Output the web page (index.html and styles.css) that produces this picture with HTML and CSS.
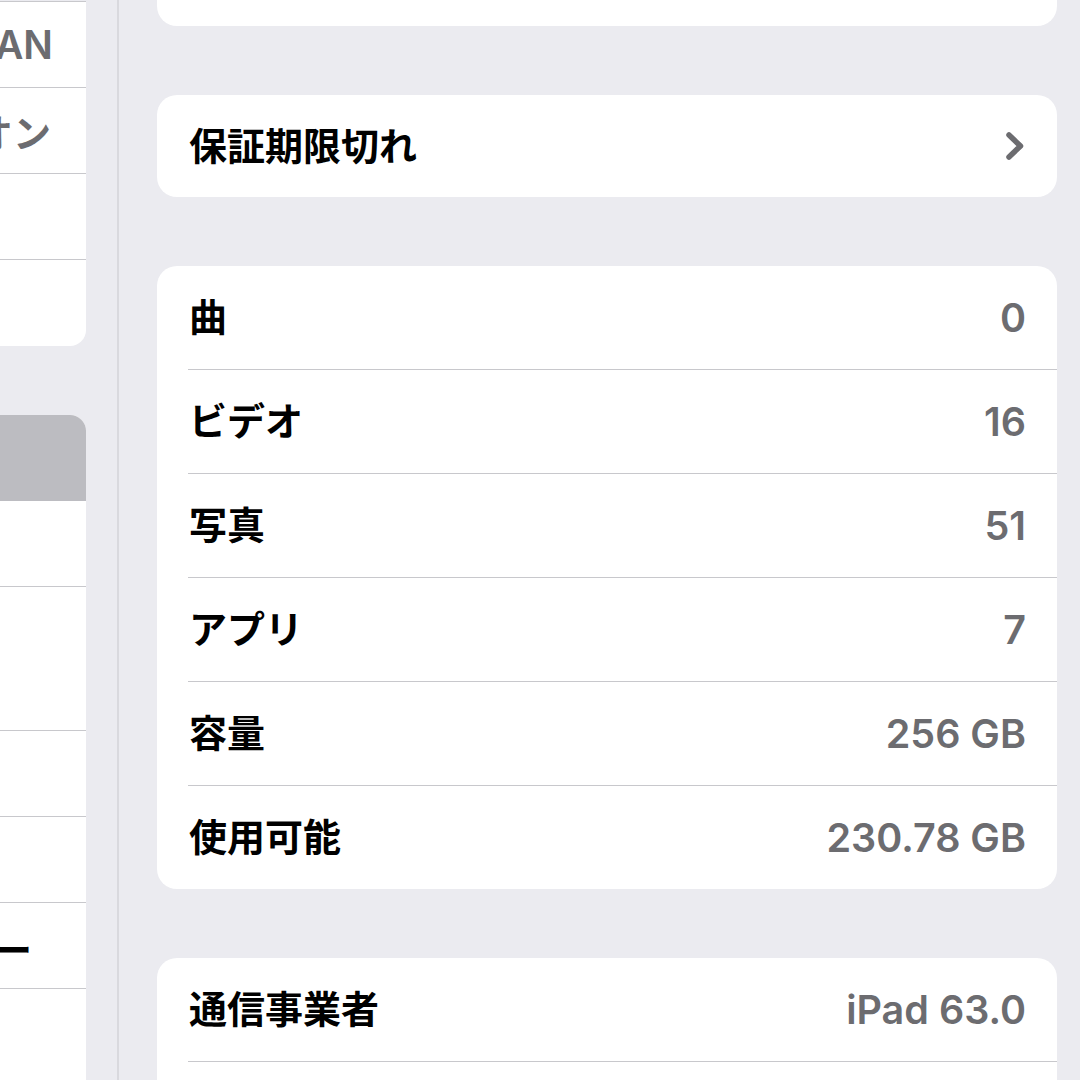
FILE: index.html
```html
<!DOCTYPE html>
<html lang="ja">
<head>
<meta charset="utf-8">
<link rel="stylesheet" href="styles.css">
</head>
<body>
<div class="screen">
  <aside class="sidebar">
    <div class="sgroup sgroup-top">
      <div class="srow"><span class="stext stext-an">AN</span></div>
      <div class="srow"><span class="stext stext-on">オン</span></div>
      <div class="srow"></div>
      <div class="srow srow-last"></div>
    </div>
    <div class="sgroup sgroup-bottom">
      <div class="srow srow-selected"></div>
      <div class="srow srow-first"></div>
      <div class="srow srow-tall"></div>
      <div class="srow"></div>
      <div class="srow"></div>
      <div class="srow"><span class="stext stext-dash">ー</span></div>
      <div class="srow srow-open"></div>
    </div>
  </aside>
  <div class="divider"></div>
  <main class="detail">
    <section class="card card-stub"></section>
    <section class="card">
      <div class="row row-single">
        <span class="label">保証期限切れ</span>
        <svg class="chevron" width="22" height="32" viewBox="0 0 22 32"><path d="M5 5 L16.5 16 L5 27" fill="none" stroke="#6c6c70" stroke-width="5.5" stroke-linecap="round" stroke-linejoin="round"/></svg>
      </div>
    </section>
    <section class="card">
      <div class="row"><span class="label">曲</span><span class="value">0</span></div>
      <div class="row"><span class="label">ビデオ</span><span class="value">16</span></div>
      <div class="row"><span class="label">写真</span><span class="value">51</span></div>
      <div class="row"><span class="label">アプリ</span><span class="value">7</span></div>
      <div class="row"><span class="label">容量</span><span class="value">256 GB</span></div>
      <div class="row"><span class="label">使用可能</span><span class="value">230.78 GB</span></div>
    </section>
    <section class="card card-open">
      <div class="row"><span class="label">通信事業者</span><span class="value">iPad 63.0</span></div>
      <div class="row"></div>
    </section>
  </main>
</div>
</body>
</html>
```
FILE: styles.css
```css
html, body {
  margin: 0;
  padding: 0;
  background: #ebebf0;
  width: 1080px;
  height: 1080px;
  overflow: hidden;
}
.screen {
  display: flex;
  align-items: flex-start;
  height: 1080px;
  overflow: hidden;
  font-family: "Noto Sans CJK JP", sans-serif;
}
.sidebar {
  width: 86px;
  flex: none;
  display: flex;
  flex-direction: column;
  gap: 69px;
}
.sgroup {
  background: #ffffff;
  display: flex;
  flex-direction: column;
}
.sgroup-top {
  margin-top: 1px;
  border-top: 1px solid #c8c8cc;
  border-bottom-right-radius: 16px;
}
.sgroup-bottom {
  border-top-right-radius: 16px;
}
.srow {
  height: 85px;
  border-bottom: 1px solid #c8c8cc;
  display: flex;
  align-items: center;
  justify-content: flex-end;
  overflow: hidden;
}
.srow-last {
  border-bottom: none;
  height: 86px;
}
.srow-selected {
  background: #bcbcc1;
  border-top-right-radius: 16px;
  border-bottom: none;
  height: 86px;
}
.srow-first {
  height: 85px;
}
.srow-tall {
  height: 143px;
}
.srow-open {
  border-bottom: none;
  height: 120px;
}
.stext {
  font-size: 38px;
  font-weight: 600;
  white-space: nowrap;
  line-height: 1;
}
.stext-an {
  font-family: "Inter", "Noto Sans CJK JP", sans-serif;
  color: #6c6c70;
  padding-right: 33px;
  font-size: 39px;
}
.stext-on {
  color: #6c6c70;
  padding-right: 35px;
}
.stext-dash {
  color: #000;
  font-weight: 700;
  padding-right: 54px;
  padding-top: 4px;
}
.divider {
  flex: none;
  width: 2px;
  height: 1080px;
  margin-left: 31px;
  background: #d9d9de;
}
.detail {
  flex: none;
  width: 900px;
  margin-left: 38px;
  display: flex;
  flex-direction: column;
  gap: 69px;
}
.card {
  background: #ffffff;
  border-radius: 20px;
  display: flex;
  flex-direction: column;
  overflow: hidden;
}
.card-stub {
  height: 26px;
  border-radius: 0 0 20px 20px;
}
.card-open {
  border-radius: 20px 20px 0 0;
}
.row {
  height: 103px;
  margin-left: 31px;
  padding-right: 32px;
  display: flex;
  align-items: center;
  justify-content: space-between;
  border-bottom: 1px solid #c8c8cc;
}
.row:last-child {
  border-bottom: none;
}
.row-single {
  height: 102px;
}
.label {
  font-size: 38px;
  font-weight: 700;
  color: #000;
  line-height: 1;
  margin-left: 1px;
  padding-bottom: 5px;
}
.value {
  font-family: "Inter", "Noto Sans CJK JP", sans-serif;
  font-size: 39.5px;
  font-weight: 600;
  color: #6c6c70;
  line-height: 1;
  padding-top: 3px;
  margin-right: -1px;
}
.chevron {
  display: block;
  margin-right: -1px;
}
```
